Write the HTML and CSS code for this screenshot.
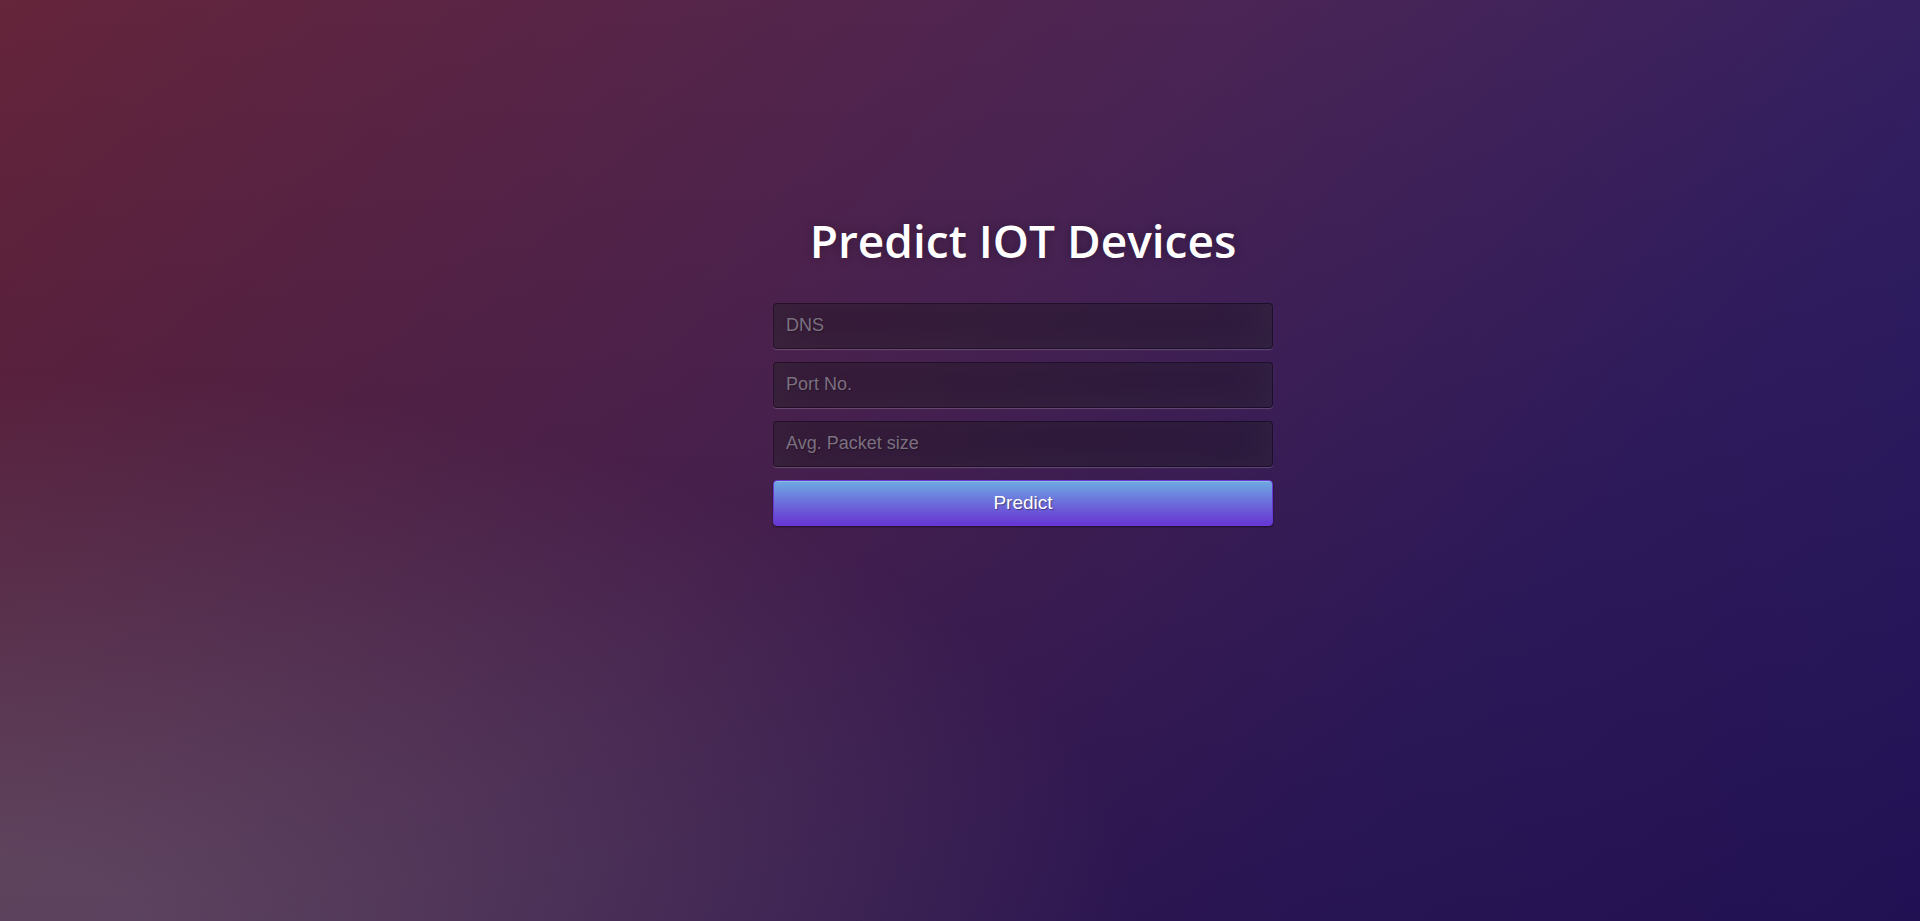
FILE: index.html
```html
<!DOCTYPE html>
<html lang="en">
<head>
<meta charset="utf-8">
<title>Predict IOT Devices</title>
<link rel="stylesheet" href="styles.css">
</head>
<body>
<div class="page">
  <div class="login">
    <h1 class="title">Predict IOT Devices</h1>
    <form class="form">
      <input class="field" type="text" name="dns" placeholder="DNS">
      <input class="field" type="text" name="port" placeholder="Port No.">
      <input class="field" type="text" name="size" placeholder="Avg. Packet size">
      <button class="btn" type="button">Predict</button>
    </form>
  </div>
</div>
</body>
</html>
```
FILE: styles.css
```css
html, body {
  margin: 0;
  padding: 0;
  width: 100%;
  height: 100%;
}
body {
  font-family: "Open Sans", sans-serif;
  background:
    radial-gradient(ellipse farthest-corner at 0% 100%, rgba(120,115,130,.45) 5%, rgba(120,115,130,0) 42%),
    linear-gradient(to bottom, rgba(70,90,170,.14) 0%, rgba(30,20,60,.22) 100%),
    linear-gradient(135deg, #6a1c28 0%, #4a1c48 45%, #2c1558 75%, #22105a 100%);
  overflow: hidden;
}
.page {
  height: 100%;
  display: flex;
  flex-direction: column;
}
.login {
  margin-left: calc(50% - 187px);
  width: 500px;
  padding-top: 208px;
}
.title {
  margin: 0 0 31px;
  color: #fff;
  font-family: "Open Sans", sans-serif;
  font-weight: 600;
  font-size: 46px;
  line-height: 64px;
  letter-spacing: 0;
  text-align: center;
  text-shadow: 0 0 10px rgba(0,0,0,0.3);
}
.form {
  display: flex;
  flex-direction: column;
  margin: 0;
}
.field {
  box-sizing: border-box;
  width: 100%;
  height: 46px;
  margin: 0 0 13px;
  padding: 0 12px 1px;
  background: rgba(0,0,0,0.3);
  border: 1px solid rgba(0,0,0,0.3);
  border-radius: 4px;
  outline: none;
  font-family: "Liberation Sans", Arial, sans-serif;
  font-size: 18px;
  color: #fff;
  text-shadow: 1px 1px 1px rgba(0,0,0,0.3);
  box-shadow: inset 0 -5px 45px rgba(100,100,100,0.2), 0 1px 1px rgba(255,255,255,0.2);
}
.field::placeholder {
  color: #7b7080;
}
.btn {
  box-sizing: border-box;
  width: 100%;
  height: 46px;
  margin-top: 0;
  border: 1px solid #6a3ad6;
  border-radius: 4px;
  background: linear-gradient(to bottom, #6eaae2 0%, #6a4fd6 75%, #6637d4 100%);
  color: #fff;
  font-family: "Liberation Sans", Arial, sans-serif;
  font-size: 19px;
  text-shadow: 1px 1px 1px rgba(0,0,0,0.4);
  box-shadow: inset 0 1px 0 rgba(255,255,255,0.2), 0 1px 2px rgba(0,0,0,0.5);
  cursor: pointer;
}
```
